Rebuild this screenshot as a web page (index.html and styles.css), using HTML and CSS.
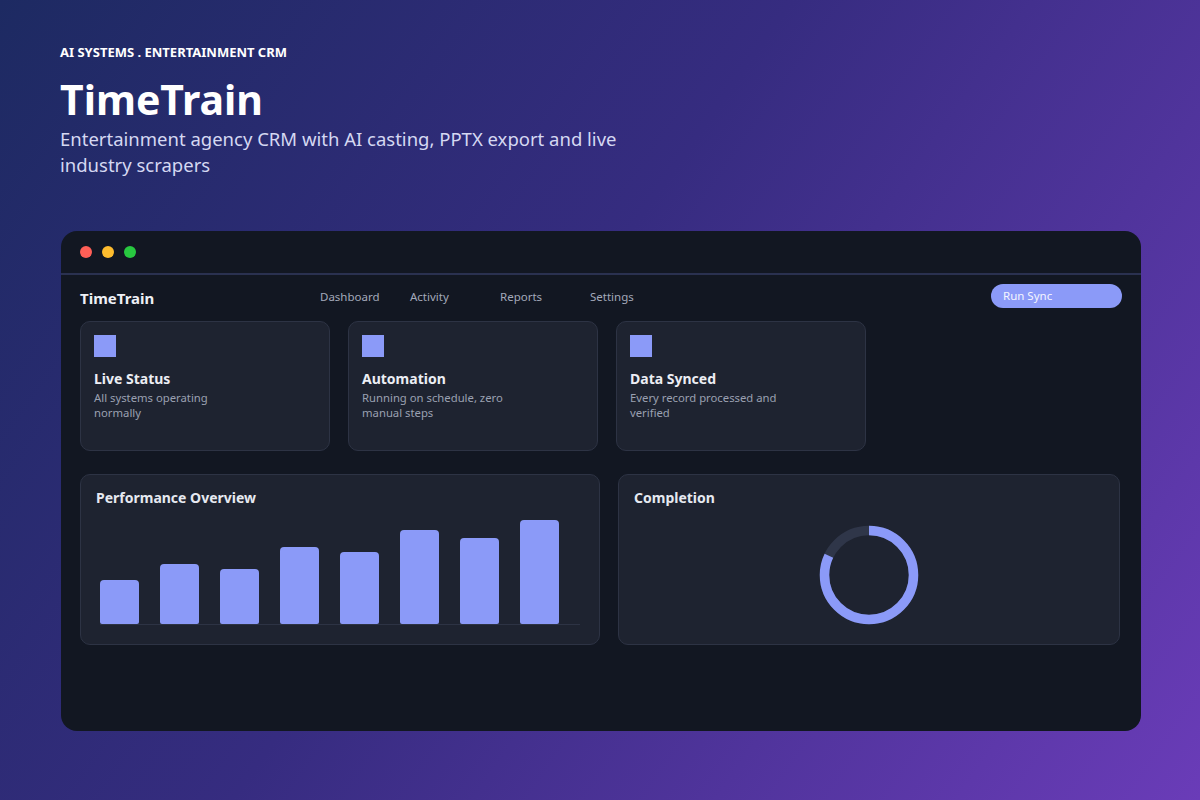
FILE: index.html
```html
<!DOCTYPE html>
<html>
<head>
<meta charset="utf-8">
<link rel="stylesheet" href="styles.css">
</head>
<body>
<div class="page">
  <header class="hero">
    <div class="eyebrow">AI SYSTEMS . ENTERTAINMENT CRM</div>
    <h1 class="title">TimeTrain</h1>
    <p class="subtitle">Entertainment agency CRM with AI casting, PPTX export and live industry scrapers</p>
  </header>

  <div class="window">
    <div class="titlebar">
      <span class="dot red"></span>
      <span class="dot yellow"></span>
      <span class="dot green"></span>
    </div>
    <div class="app">
      <div class="topnav">
        <div class="brand">TimeTrain</div>
        <nav class="links">
          <span class="link">Dashboard</span>
          <span class="link">Activity</span>
          <span class="link">Reports</span>
          <span class="link">Settings</span>
        </nav>
        <div class="btn">Run Sync</div>
      </div>

      <div class="cards">
        <div class="card">
          <div class="icon"></div>
          <div class="card-title">Live Status</div>
          <div class="card-desc">All systems operating normally</div>
        </div>
        <div class="card">
          <div class="icon"></div>
          <div class="card-title">Automation</div>
          <div class="card-desc">Running on schedule, zero manual steps</div>
        </div>
        <div class="card">
          <div class="icon"></div>
          <div class="card-title">Data Synced</div>
          <div class="card-desc">Every record processed and verified</div>
        </div>
      </div>

      <div class="panels">
        <div class="panel">
          <div class="panel-title">Performance Overview</div>
          <div class="bars">
            <div class="bar" style="height:44px"></div>
            <div class="bar" style="height:60px"></div>
            <div class="bar" style="height:55px"></div>
            <div class="bar" style="height:77px"></div>
            <div class="bar" style="height:72px"></div>
            <div class="bar" style="height:94px"></div>
            <div class="bar" style="height:86px"></div>
            <div class="bar" style="height:104px"></div>
          </div>
        </div>
        <div class="panel">
          <div class="panel-title">Completion</div>
          <div class="donut-wrap">
            <svg class="donut" width="100" height="100" viewBox="0 0 100 100">
              <circle cx="50" cy="50" r="44.5" fill="none" stroke="#2f3649" stroke-width="9.5"/>
              <circle cx="50" cy="50" r="44.5" fill="none" stroke="#8b9af8" stroke-width="9.5"
                stroke-dasharray="229.3 279.6" transform="rotate(-90 50 50)"/>
            </svg>
          </div>
        </div>
      </div>
    </div>
  </div>
</div>
</body>
</html>
```

FILE: styles.css
```css
* { box-sizing: border-box; }
html, body { margin: 0; padding: 0; }
body {
  width: 1200px;
  height: 800px;
  overflow: hidden;
  font-family: "Noto Sans", "Open Sans", sans-serif;
  background: linear-gradient(125deg, #1d2a62 0%, #362c80 45%, #6a3cb8 100%);
  color: #ffffff;
}
.page {
  padding: 44px 60px 0 61px;
}
.hero {
  margin-left: -1px;
}
.eyebrow {
  font-size: 13px;
  font-weight: 700;
  line-height: 16px;
  color: #ffffff;
}
.title {
  margin: 13px 0 0;
  font-size: 41px;
  font-weight: 700;
  line-height: 52px;
  color: #ffffff;
}
.subtitle {
  margin: 1px 0 0;
  width: 580px;
  font-size: 18.5px;
  line-height: 26px;
  color: #d5d8f2;
}
.window {
  margin-top: 53px;
  width: 1080px;
  height: 500px;
  background: #121722;
  border-radius: 16px;
  overflow: hidden;
}
.titlebar {
  height: 44px;
  border-bottom: 2px solid #2a3150;
  display: flex;
  align-items: center;
  gap: 10px;
  padding: 0 0 0 19px;
}
.dot {
  width: 12px;
  height: 12px;
  border-radius: 50%;
}
.red { background: #ff5f57; }
.yellow { background: #febc2e; }
.green { background: #28c840; }
.app {
  padding: 8px 19px 0 19px;
}
.topnav {
  display: flex;
  align-items: center;
  height: 26px;
}
.brand {
  width: 240px;
  font-size: 15px;
  font-weight: 700;
  color: #eef0f6;
  margin-top: 4px;
}
.links {
  display: flex;
  flex: 1;
}
.link {
  width: 90px;
  font-size: 11.5px;
  color: #a3a9ba;
}
.btn {
  width: 131px;
  height: 24px;
  border-radius: 12px;
  background: #8b9af8;
  color: #f4f5ff;
  font-size: 11.5px;
  line-height: 24px;
  padding-left: 12px;
}
.cards {
  margin-top: 12px;
  display: flex;
  gap: 18px;
}
.card {
  width: 250px;
  height: 130px;
  background: #1e2330;
  border: 1px solid #2d3344;
  border-radius: 10px;
  padding: 13px 13px;
}
.icon {
  width: 22px;
  height: 22px;
  background: #8b9af8;
}
.card-title {
  margin-top: 12px;
  font-size: 14px;
  font-weight: 700;
  color: #eceef4;
  line-height: 19px;
}
.card-desc {
  margin-top: 2px;
  width: 160px;
  font-size: 11.3px;
  line-height: 15px;
  color: #9aa0b1;
}
.panels {
  margin-top: 23px;
  display: grid;
  grid-template-columns: 520px 502px;
  gap: 18px;
}
.panel {
  height: 171px;
  background: #1e2330;
  border: 1px solid #2d3344;
  border-radius: 10px;
  padding: 13px 15px;
}
.panel-title {
  font-size: 14px;
  font-weight: 700;
  color: #e6e9f0;
  line-height: 20px;
}
.bars {
  margin: 13px 0 0 4px;
  width: 480px;
  height: 104px;
  display: flex;
  align-items: flex-end;
  border-bottom: 1px solid #2d3344;
}
.bar {
  width: 39px;
  margin-right: 21px;
  background: #8b9af8;
  border-radius: 4px 4px 2px 2px;
}
.donut-wrap {
  display: flex;
  justify-content: center;
  padding-top: 17px;
}
.donut {
  display: block;
}
```
